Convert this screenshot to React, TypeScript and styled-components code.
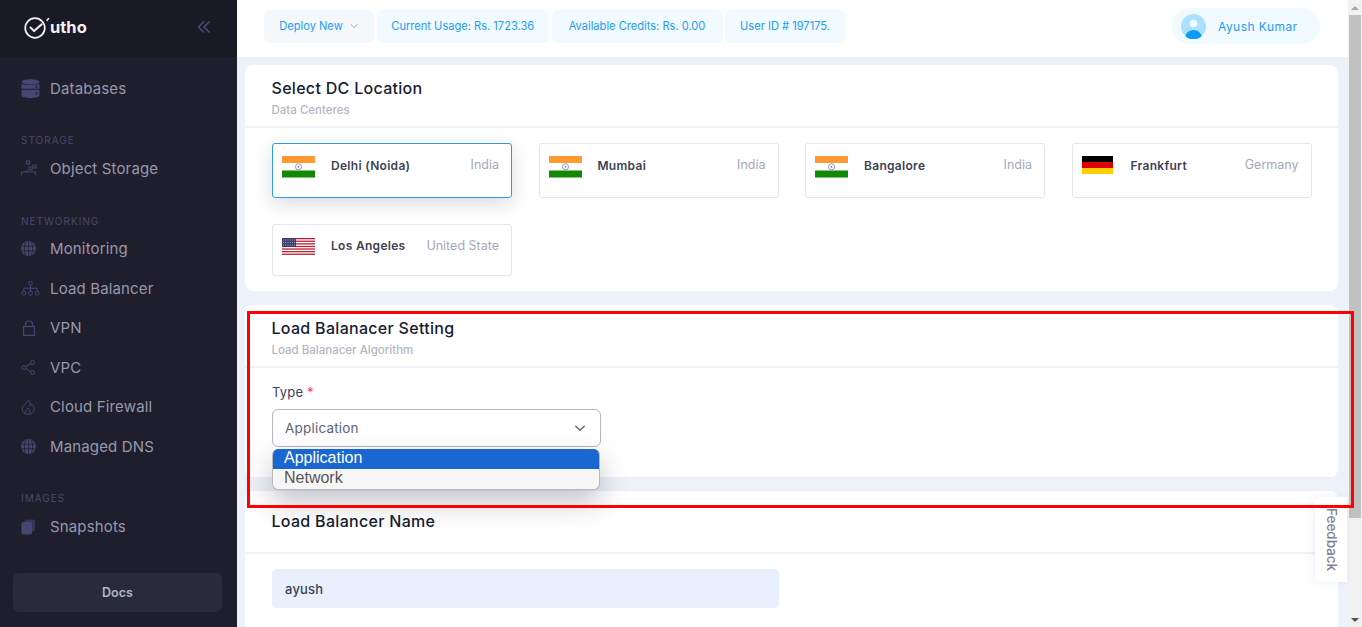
import { ReactNode } from 'react';
import styled, { createGlobalStyle } from 'styled-components';

const GlobalStyle = createGlobalStyle`
  html, body {
    margin: 0;
    height: 100%;
    overflow: hidden;
    font-family: Inter, "Noto Sans", sans-serif;
  }
  * {
    box-sizing: border-box;
  }
`;

const Page = styled.div`
  position: relative;
  display: flex;
  width: 1362px;
  height: 627px;
  overflow: hidden;
  background: #edf1f9;
`;

const Sidebar = styled.aside`
  flex: 0 0 237px;
  display: flex;
  flex-direction: column;
  background: #1e1e2d;
`;

const Brand = styled.div`
  flex: 0 0 57px;
  display: flex;
  align-items: center;
  justify-content: space-between;
  padding: 0 26px 4px 23px;
  background: #1a1a27;
`;

const LogoGroup = styled.div`
  display: flex;
  align-items: center;
`;

const LogoText = styled.span`
  font-size: 16.5px;
  font-weight: 700;
  color: #f2f2f2;
`;

const Nav = styled.nav`
  flex: 1;
  display: flex;
  flex-direction: column;
  padding-top: 12px;
`;

const NavItem = styled.div`
  display: flex;
  align-items: center;
  height: 39.5px;
  padding-left: 21px;
  font-size: 15px;
  font-weight: 400;
  letter-spacing: 0.15px;
  color: #9899ac;
`;

const NavIcon = styled.span`
  flex: 0 0 29px;
  display: flex;
  align-items: center;
`;

const SectionLabel = styled.div<{ $top: number; $after?: number }>`
  margin-top: ${(p) => p.$top}px;
  margin-bottom: ${(p) => p.$after ?? 0}px;
  padding-left: 21px;
  height: 16px;
  line-height: 16px;
  font-size: 10px;
  letter-spacing: 1px;
  color: #4a4a63;
`;

const DocsButton = styled.div`
  margin: auto 15px 15px 13px;
  height: 39px;
  display: flex;
  align-items: center;
  justify-content: center;
  border-radius: 6px;
  background: #2a2b3a;
  font-size: 12.5px;
  font-weight: 600;
  color: #b5b5c3;
`;

const Main = styled.main`
  flex: 1;
  min-width: 0;
  display: flex;
  flex-direction: column;
`;

const TopBar = styled.header`
  flex: 0 0 57px;
  display: flex;
  align-items: center;
  padding: 0 28px 5px 27px;
  background: #fff;
`;

const Pills = styled.div`
  display: flex;
  gap: 2.5px;
`;

const Pill = styled.div<{ $w: number; $muted?: boolean }>`
  width: ${(p) => p.$w}px;
  height: 33px;
  display: flex;
  align-items: center;
  justify-content: center;
  gap: 6px;
  border-radius: 6px;
  background: ${(p) => (p.$muted ? '#f5f8fa' : '#f1faff')};
  font-size: 11.1px;
  color: #1e9bf5;
  white-space: nowrap;
`;

const UserPill = styled.div`
  margin-left: auto;
  width: 148px;
  height: 36px;
  display: flex;
  align-items: center;
  gap: 12px;
  padding-left: 9px;
  border-radius: 18px;
  background: #f1faff;
  font-size: 12px;
  font-weight: 400;
  letter-spacing: 0.45px;
  color: #1e9bf5;
`;

const Content = styled.div`
  flex: 1;
  min-height: 0;
  display: flex;
  flex-direction: column;
  gap: 14px;
  padding: 8px 10px 0 8px;
`;

const Card = styled.section<{ $h: number }>`
  flex: 0 0 ${(p) => p.$h}px;
  background: #fff;
  border-radius: 8px;
`;

const CardHead = styled.div<{ $plain?: boolean }>`
  height: 63px;
  padding: ${(p) => (p.$plain ? '21px' : '14px')} 26px 0 26.5px;
  border-bottom: 2px solid #eff2f5;
`;

const Title = styled.h2`
  margin: 0;
  height: 19px;
  line-height: 19px;
  font-size: 16px;
  font-weight: 450;
  letter-spacing: 0.3px;
  color: #181c32;
`;

const Sub = styled.div`
  margin-top: 5px;
  line-height: 15px;
  font-size: 11.5px;
  font-weight: 500;
  color: #b5b5c3;
`;

const Tiles = styled.div`
  display: grid;
  grid-template-columns: repeat(4, 240px);
  grid-template-rows: 55px 52px;
  column-gap: 26.5px;
  row-gap: 26px;
  padding: 15px 0 0 27px;
`;

const Tile = styled.div<{ $active?: boolean; $short?: boolean }>`
  display: grid;
  grid-template-columns: 49px 1fr auto;
  align-items: start;
  padding: ${(p) => (p.$short ? '13px' : '12px')} 12px 0 9px;
  border: 1px solid ${(p) => (p.$active ? '#3298e6' : '#e4e6ef')};
  border-radius: 3px;
  box-shadow: ${(p) => (p.$active ? '0 6px 18px rgba(60, 80, 90, 0.2)' : 'none')};

  ${(p) => p.$short && '& > span { padding-top: 0; }'}
`;

const TileName = styled.span`
  padding-top: 2px;
  line-height: 16px;
  font-size: 12px;
  font-weight: 600;
  letter-spacing: 0.3px;
  color: #3f4254;
`;

const TileCountry = styled.span`
  padding-top: 1px;
  line-height: 16px;
  font-size: 12.5px;
  color: #a5a8bc;
`;

const Form = styled.div`
  position: relative;
  padding: 15px 0 0 27px;
`;

const FieldLabel = styled.label`
  display: block;
  line-height: 18px;
  font-size: 13px;
  font-weight: 400;
  letter-spacing: 0.2px;
  color: #3f4254;
`;

const Required = styled.span`
  color: #f1416c;
`;

const SelectBox = styled.div`
  width: 329px;
  height: 38px;
  margin-top: 8px;
  display: flex;
  align-items: center;
  justify-content: space-between;
  padding: 0 13px 0 12px;
  border: 1px solid #b5b5c3;
  border-radius: 6px;
  background: #fff;
  font-size: 13.5px;
  letter-spacing: 0.2px;
  color: #5e6278;
`;

const OptionList = styled.ul`
  position: absolute;
  top: 81px;
  left: 27px;
  width: 328px;
  margin: 0;
  padding: 0;
  list-style: none;
  overflow: hidden;
  border: 1px solid #b9b9b9;
  border-top: 0;
  border-radius: 6px;
  background: #f6f6f6;
  box-shadow: 0 12px 28px rgba(40, 40, 60, 0.28);
  z-index: 2;
  font-family: "Liberation Sans", Arial, sans-serif;
  font-size: 16px;
`;

const Option = styled.li<{ $selected?: boolean }>`
  height: 20px;
  line-height: 18px;
  padding-left: 11px;
  background: ${(p) => (p.$selected ? '#1a67d2' : 'transparent')};
  color: ${(p) => (p.$selected ? '#fff' : '#555')};
`;

const TextInput = styled.div`
  width: 507px;
  height: 39px;
  margin: 15px 0 0 27px;
  display: flex;
  align-items: center;
  padding-left: 13px;
  border-radius: 5px;
  background: #e8f0fe;
  font-size: 13px;
  font-weight: 500;
  letter-spacing: 0.2px;
  color: #3f4254;
`;

const Scrollbar = styled.div`
  flex: 0 0 14px;
  display: flex;
  flex-direction: column;
  align-items: center;
  background: #f1f1f1;
`;

const ScrollArrow = styled.div<{ $down?: boolean }>`
  flex: 0 0 15px;
  display: flex;
  align-items: center;
  justify-content: center;
  &::before {
    content: '';
    border-left: 4px solid transparent;
    border-right: 4px solid transparent;
    ${(p) => (p.$down ? 'border-top: 4px solid #505050;' : 'border-bottom: 4px solid #a3a3a3;')}
  }
`;

const ScrollThumb = styled.div`
  flex: 0 0 503px;
  width: 12px;
  background: #c1c1c1;
`;

const ScrollTrack = styled.div`
  flex: 1;
`;

const FeedbackTab = styled.div`
  position: absolute;
  top: 497px;
  left: 1315px;
  width: 32px;
  height: 85px;
  padding-top: 11px;
  padding-left: 2px;
  border-radius: 6px 0 0 6px;
  background: #fff;
  box-shadow: -2px 0 10px rgba(70, 80, 110, 0.08);
  writing-mode: vertical-rl;
  font-size: 13.5px;
  font-weight: 500;
  line-height: 30px;
  color: #7a7e96;
`;

const Highlight = styled.div`
  position: absolute;
  top: 311px;
  left: 247px;
  width: 1107px;
  height: 197px;
  border: 3px solid #f00;
  pointer-events: none;
  z-index: 3;
`;

function Logo() {
  return (
    <svg width="27" height="26" viewBox="0 0 27 26" fill="none" stroke="#f2f2f2">
      <circle cx="12" cy="14" r="9.8" strokeWidth="1.7" />
      <path d="M7.5 13.5l3.6 3.600 7.600-6.800" strokeWidth="2" strokeLinecap="round" strokeLinejoin="round" />
      <path d="M24 6.500l1.600-2" strokeWidth="1.400" strokeLinecap="round" />
    </svg>
  );
}

function Collapse() {
  return (
    <svg width="14" height="14" viewBox="0 0 14 14" fill="none" stroke="#4b4d78" strokeWidth="1.5">
      <path d="M7 1.500L1.500 7 7 12.500M12.500 1.500L7 7l5.500 5.500" />
    </svg>
  );
}

const ICON = '#454772';

function DbIcon() {
  return (
    <svg width="19" height="20" viewBox="0 0 19 20" fill={ICON}>
      <ellipse cx="9.500" cy="3" rx="9" ry="2.800" />
      <path d="M.5 4.800C2 6.400 17 6.400 18.500 4.800v5H.5zM.5 10.800h18v5.500c0 3.600-18 3.600-18 0z" />
      <circle cx="15.500" cy="8" r="1" fill="#1e1e2d" />
      <circle cx="15.500" cy="14" r="1" fill="#1e1e2d" />
    </svg>
  );
}

function StorageIcon() {
  return (
    <svg width="16" height="16" viewBox="0 0 16 16" fill="none" stroke={ICON} strokeWidth="1">
      <rect x="5.500" y="1" width="3" height="3" />
      <rect x="8" y="7" width="3" height="3" />
      <rect x="12" y="5" width="3" height="3" />
      <path d="M.5 15v-3h14v3M6 10v2" />
    </svg>
  );
}

function GlobeIcon() {
  return (
    <svg width="15" height="15" viewBox="0 0 15 15" fill={ICON}>
      <circle cx="7.500" cy="7.500" r="7.500" />
      <path d="M.5 5.200h14M.5 9.800h14M7.500 0v15M4.500 1C3 5 3 10 4.500 14M10.500 1c1.500 4 1.500 9 0 13" fill="none" stroke="#1e1e2d" strokeWidth=".8" />
    </svg>
  );
}

function BalancerIcon() {
  return (
    <svg width="19" height="15" viewBox="0 0 19 15" fill="none" stroke={ICON} strokeWidth="1">
      <circle cx="9.500" cy="2.300" r="1.800" />
      <circle cx="2.800" cy="12.200" r="2" />
      <circle cx="9.500" cy="12.200" r="2" />
      <circle cx="16.200" cy="12.200" r="2" />
      <path d="M9.500 4v6M2.800 10V7.200h13.400V10" />
    </svg>
  );
}

function LockIcon() {
  return (
    <svg width="16" height="16" viewBox="0 0 16 16" fill="none" stroke={ICON} strokeWidth="1.2">
      <rect x="2.600" y="6.600" width="10.800" height="8.800" />
      <path d="M4.500 6.500V4.500a3.500 3.500 0 0 1 7 0v2" />
    </svg>
  );
}

function ShareIcon() {
  return (
    <svg width="15" height="15" viewBox="0 0 15 15" fill="none" stroke={ICON} strokeWidth="1">
      <circle cx="3" cy="7.500" r="2" />
      <circle cx="11.500" cy="2.500" r="2" />
      <circle cx="11.500" cy="12.500" r="2" />
      <path d="M4.800 6.500l5-3M4.800 8.500l5 3" />
    </svg>
  );
}

function FireIcon() {
  return (
    <svg width="15" height="16" viewBox="0 0 15 16" fill="none" stroke={ICON} strokeWidth="1">
      <path d="M7 .8c.6 3-5.800 5-5.800 9.200a6 5.400 0 0 0 12 0c0-2.800-1.800-4.500-2.800-5.200 0 1.200-.6 2-1.400 2.200C9.500 5 9 2.500 7 .8z" />
      <path d="M5 14c-1.500-2 .5-3 2-5 .5 1.500 3 3 1.800 5" />
    </svg>
  );
}

function SnapshotIcon() {
  return (
    <svg width="15" height="16" viewBox="0 0 15 16" fill={ICON}>
      <rect x="3.500" y="0.500" width="10.500" height="12" rx="2" opacity=".6" />
      <rect x="0.500" y="3" width="10.500" height="12.500" rx="2" />
    </svg>
  );
}

function IndiaFlag() {
  return (
    <svg width="33" height="22" viewBox="0 0 33 22">
      <rect width="33" height="7" fill="#ff9933" />
      <rect y="14.500" width="33" height="7" fill="#128807" />
      <circle cx="16.500" cy="10.800" r="3" fill="none" stroke="#8f8fd0" strokeWidth="1" />
      <circle cx="16.500" cy="10.800" r=".9" fill="#6a6ac0" />
    </svg>
  );
}

function GermanyFlag() {
  return (
    <svg width="31" height="18" viewBox="0 0 31 18">
      <rect width="31" height="6" fill="#000" />
      <rect y="6" width="31" height="6" fill="#d00" />
      <rect y="12" width="31" height="6" fill="#ffce00" />
    </svg>
  );
}

function UsaFlag() {
  return (
    <svg width="33" height="17" viewBox="0 0 33 17">
      <rect width="33" height="17" fill="#fff" />
      {[0, 2.6, 5.2, 7.8, 10.4, 13, 15.6].map((y) => (
        <rect key={y} y={y} width="33" height="1.300" fill="#b22234" />
      ))}
      <rect width="14" height="9" fill="#3c3b6e" />
      <path d="M1 2h12M1 4.500h12M1 7h12" stroke="#c8c8e0" strokeWidth=".8" strokeDasharray="1 1.200" />
    </svg>
  );
}

function Avatar() {
  return (
    <svg width="25" height="25" viewBox="0 0 25 25">
      <circle cx="12.500" cy="12.500" r="12.500" fill="#abe0ff" />
      <circle cx="12.500" cy="9.500" r="3.800" fill="#f1faff" />
      <path d="M4.500 22.500a8 6.500 0 0 1 16 0 12.500 12.500 0 0 1-16 0z" fill="#0d9bf2" />
    </svg>
  );
}

function Chevron({ size, color }: { size: number; color: string }) {
  return (
    <svg width={size} height={size} viewBox="0 0 12 12" fill="none" stroke={color} strokeWidth="1.200">
      <path d="M2 4l4 4 4-4" />
    </svg>
  );
}

function Item({ icon, children }: { icon: ReactNode; children: ReactNode }) {
  return (
    <NavItem>
      <NavIcon>{icon}</NavIcon>
      {children}
    </NavItem>
  );
}

const locations = [
  { name: 'Delhi (Noida)', country: 'India', flag: <IndiaFlag />, active: true },
  { name: 'Mumbai', country: 'India', flag: <IndiaFlag /> },
  { name: 'Bangalore', country: 'India', flag: <IndiaFlag /> },
  { name: 'Frankfurt', country: 'Germany', flag: <GermanyFlag /> },
  { name: 'Los Angeles', country: 'United State', flag: <UsaFlag />, short: true },
];

export default function App() {
  return (
    <Page>
      <GlobalStyle />
      <Sidebar>
        <Brand>
          <LogoGroup>
            <Logo />
            <LogoText>utho</LogoText>
          </LogoGroup>
          <Collapse />
        </Brand>
        <Nav>
          <Item icon={<DbIcon />}>Databases</Item>
          <SectionLabel $top={23} $after={1}>STORAGE</SectionLabel>
          <Item icon={<StorageIcon />}>Object Storage</Item>
          <SectionLabel $top={25}>NETWORKING</SectionLabel>
          <Item icon={<GlobeIcon />}>Monitoring</Item>
          <Item icon={<BalancerIcon />}>Load Balancer</Item>
          <Item icon={<LockIcon />}>VPN</Item>
          <Item icon={<ShareIcon />}>VPC</Item>
          <Item icon={<FireIcon />}>Cloud Firewall</Item>
          <Item icon={<GlobeIcon />}>Managed DNS</Item>
          <SectionLabel $top={24} $after={1}>IMAGES</SectionLabel>
          <Item icon={<SnapshotIcon />}>Snapshots</Item>
          <DocsButton>Docs</DocsButton>
        </Nav>
      </Sidebar>
      <Main>
        <TopBar>
          <Pills>
            <Pill $w={110} $muted>
              Deploy New <Chevron size={10} color="#a1a5b7" />
            </Pill>
            <Pill $w={172.5}>Current Usage: Rs. 1723.36</Pill>
            <Pill $w={171}>Available Credits: Rs. 0.00</Pill>
            <Pill $w={120}>User ID # 197175.</Pill>
          </Pills>
          <UserPill>
            <Avatar />
            Ayush Kumar
          </UserPill>
        </TopBar>
        <Content>
          <Card $h={226}>
            <CardHead>
              <Title>Select DC Location</Title>
              <Sub>Data Centeres</Sub>
            </CardHead>
            <Tiles>
              {locations.map((l) => (
                <Tile key={l.name} $active={l.active} $short={l.short}>
                  {l.flag}
                  <TileName>{l.name}</TileName>
                  <TileCountry>{l.country}</TileCountry>
                </Tile>
              ))}
            </Tiles>
          </Card>
          <Card $h={172}>
            <CardHead>
              <Title>Load Balanacer Setting</Title>
              <Sub>Load Balanacer Algorithm</Sub>
            </CardHead>
            <Form>
              <FieldLabel>
                Type <Required>*</Required>
              </FieldLabel>
              <SelectBox>
                Application
                <Chevron size={14} color="#5e6278" />
              </SelectBox>
              <OptionList>
                <Option $selected>Application</Option>
                <Option>Network</Option>
              </OptionList>
            </Form>
          </Card>
          <Card $h={200}>
            <CardHead $plain>
              <Title>Load Balancer Name</Title>
            </CardHead>
            <TextInput>ayush</TextInput>
          </Card>
        </Content>
      </Main>
      <Scrollbar>
        <ScrollArrow />
        <ScrollThumb />
        <ScrollTrack />
        <ScrollArrow $down />
      </Scrollbar>
      <FeedbackTab>Feedback</FeedbackTab>
      <Highlight />
    </Page>
  );
}
